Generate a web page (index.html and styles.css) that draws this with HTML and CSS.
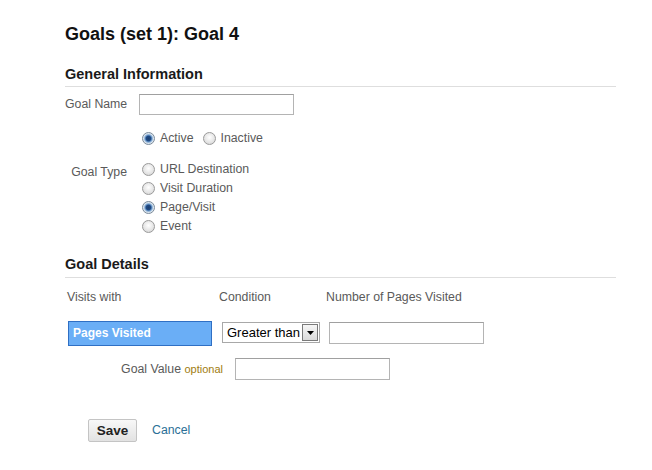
FILE: index.html
```html
<!DOCTYPE html>
<html>
<head>
<meta charset="utf-8">
<link rel="stylesheet" href="styles.css">
</head>
<body>
<div class="page">
  <h1 class="title">Goals (set 1): Goal 4</h1>

  <h2 class="section first">General Information</h2>

  <div class="row name-row">
    <label class="label">Goal Name</label>
    <span class="input w155"></span>
  </div>

  <div class="status-row">
    <span class="opt"><span class="radio checked"></span><span class="opt-text">Active</span></span>
    <span class="opt"><span class="radio"></span><span class="opt-text">Inactive</span></span>
  </div>

  <div class="type-row">
    <label class="label type-label">Goal Type</label>
    <div class="type-list">
      <div class="opt"><span class="radio"></span><span class="opt-text">URL Destination</span></div>
      <div class="opt"><span class="radio"></span><span class="opt-text">Visit Duration</span></div>
      <div class="opt"><span class="radio checked"></span><span class="opt-text">Page/Visit</span></div>
      <div class="opt"><span class="radio"></span><span class="opt-text">Event</span></div>
    </div>
  </div>

  <h2 class="section second">Goal Details</h2>

  <div class="head-row">
    <span class="head c1">Visits with</span>
    <span class="head c2">Condition</span>
    <span class="head c3">Number of Pages Visited</span>
  </div>

  <div class="crit-row">
    <span class="metric">Pages Visited</span>
    <span class="select"><span class="select-text">Greater than</span><span class="select-btn"><svg width="7" height="4" viewBox="0 0 7 4"><path d="M0 0H7L3.5 4Z" fill="#000"/></svg></span></span>
    <span class="input w155 h22"></span>
  </div>

  <div class="row value-row">
    <label class="label value-label">Goal Value <span class="optional">optional</span></label>
    <span class="input w155 h22"></span>
  </div>

  <div class="actions">
    <span class="btn">Save</span>
    <a class="cancel">Cancel</a>
  </div>
</div>
</body>
</html>
```
FILE: styles.css
```css
html, body {
  margin: 0;
  padding: 0;
  background: #fff;
}
body {
  font-family: "Liberation Sans", Arial, sans-serif;
  color: #555;
  font-size: 12.3px;
}
.page {
  width: 551px;
  padding: 23px 0 0 65px;
}
.title {
  margin: 0;
  font-size: 18px;
  line-height: 22px;
  font-weight: bold;
  color: #111;
}
.section {
  margin: 0;
  font-size: 14.5px;
  line-height: 18px;
  font-weight: bold;
  color: #1a1a1a;
  border-bottom: 1px solid #dedede;
}
.section.first {
  margin-top: 20px;
  padding-bottom: 3px;
}
.section.second {
  margin-top: 19px;
  padding-bottom: 4px;
}
.row {
  display: flex;
  align-items: flex-start;
}
.label {
  width: 62px;
  text-align: right;
  margin-right: 12px;
  line-height: 21px;
  color: #5a5a5a;
  white-space: nowrap;
}
.name-row {
  margin-top: 7px;
}
.input {
  display: block;
  box-sizing: border-box;
  height: 21px;
  border: 1px solid #b4b4b4;
  border-top-color: #a0a0a0;
  background: #fff;
}
.w155 { width: 155px; }
.h22 { height: 22px; }

.status-row {
  display: flex;
  margin-top: 14px;
  padding-left: 77px;
}
.opt {
  display: flex;
  align-items: center;
  height: 19px;
  line-height: 19px;
}
.status-row .opt + .opt {
  margin-left: 9px;
}
.radio {
  box-sizing: border-box;
  width: 13px;
  height: 13px;
  border-radius: 50%;
  border: 1px solid #9a9a9a;
  background: radial-gradient(circle at 50% 40%, #ffffff 0%, #e6e6e6 55%, #cfcfcf 100%);
  margin-right: 5px;
  flex: none;
}
.radio.checked {
  border-color: #7a8a9a;
  background: radial-gradient(circle at 50% 50%, #1d3f6e 0%, #1f4a85 30%, #6f9ccd 45%, #d9e4ee 62%, #f2f2f2 100%);
}
.opt-text {
  color: #5a5a5a;
}

.type-row {
  display: flex;
  margin-top: 12px;
}
.type-label {
  line-height: 14px;
  padding-top: 5px;
  margin-right: 15px;
}
.type-list {
  display: flex;
  flex-direction: column;
}

.head-row {
  display: flex;
  margin-top: 12px;
  line-height: 14px;
}
.head { color: #5a5a5a; white-space: nowrap; }
.c1 { margin-left: 2px; width: 152px; }
.c2 { width: 107px; }

.crit-row {
  display: flex;
  align-items: flex-start;
  margin-top: 17px;
  padding-left: 3px;
}
.metric {
  box-sizing: border-box;
  width: 144px;
  height: 25px;
  line-height: 23px;
  padding-left: 4px;
  background: #6aaef6;
  border: 1px solid #2f6fc4;
  color: #fff;
  font-weight: bold;
  font-size: 12px;
}
.select {
  box-sizing: border-box;
  display: flex;
  align-items: center;
  width: 98px;
  height: 21px;
  margin-left: 10px;
  margin-top: 1px;
  border: 1px solid #a8a8a8;
  background: #fff;
  padding-left: 4px;
  white-space: nowrap;
}
.select-text {
  flex: 1;
  font-size: 13px;
  color: #000;
  line-height: 19px;
  white-space: nowrap;
  overflow: hidden;
}
.select-btn {
  box-sizing: border-box;
  width: 16px;
  height: 17px;
  margin-right: 1px;
  border: 1px solid #7a7a7a;
  background: linear-gradient(#f6f6f6, #dadada);
  display: flex;
  align-items: center;
  justify-content: center;
  flex: none;
}
.crit-row .input {
  margin-left: 9px;
  margin-top: 1px;
}

.value-row {
  margin-top: 12px;
}
.value-label {
  width: 158px;
  line-height: 22px;
}
.optional {
  font-size: 11px;
  color: #a07c10;
}

.actions {
  display: flex;
  align-items: center;
  margin-top: 39px;
  padding-left: 23px;
}
.btn {
  box-sizing: border-box;
  width: 49px;
  height: 23px;
  line-height: 21px;
  text-align: center;
  font-weight: bold;
  font-size: 13.5px;
  color: #222;
  border: 1px solid #c4c4c4;
  border-radius: 2px;
  background: linear-gradient(#f8f8f8, #e2e2e2);
}
.cancel {
  margin-left: 15px;
  color: #2a6f96;
  font-size: 12.3px;
  margin-top: -2px;
}
```
